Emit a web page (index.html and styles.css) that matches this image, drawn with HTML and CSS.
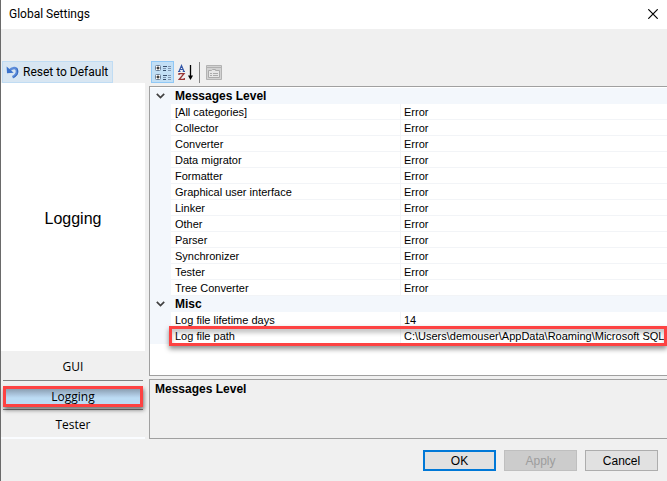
FILE: index.html
```html
<!DOCTYPE html>
<html lang="en">
<head>
<meta charset="utf-8">
<meta name="viewport" content="width=device-width, initial-scale=1">
<title>Global Settings</title>
<link rel="stylesheet" href="styles.css">
</head>
<body>
<div class="dialog">
  <header class="titlebar">
    <h1>Global Settings</h1>
    <button class="close" type="button" aria-label="Close">
      <svg width="10" height="10" viewBox="0 0 10 10"><path d="M0.3 0.3 9.7 9.7M9.7 0.3 0.3 9.7" stroke="#000" stroke-width="1.2" fill="none"/></svg>
    </button>
  </header>
  <main class="content">
    <aside class="sidebar">
      <button class="reset" type="button">
        <svg width="14" height="14" viewBox="0 0 14 14"><path d="M3 6C6 2.3 10.700 1.800 11 6c.2 3-1.700 5-4.500 6.200" fill="none" stroke="#5b8bd9" stroke-width="2.600"/><path d="M7.500 12.300c3.700-1.300 5.500-5.500 3.300-9" fill="none" stroke="#2f63b8" stroke-width="1"/><path d="M.6 1.500 1 8.200l6.700-.4z" fill="#3a72cc"/></svg>
        Reset to Default
      </button>
      <div class="page-name">Logging</div>
      <nav class="tabs">
        <button type="button">GUI</button>
        <button type="button" class="selected">Logging</button>
        <button type="button">Tester</button>
      </nav>
    </aside>
    <section class="settings">
      <div class="toolbar">
        <button type="button" class="tool active" aria-label="Categorized">
          <svg width="18" height="17" viewBox="0 0 18 17"><g fill="#fff" stroke="#6b8099"><rect x="1.500" y="1.500" width="5" height="5" rx="1"/><rect x="1.500" y="10.500" width="5" height="5" rx="1"/></g><path d="M2.500 4h3M4 2.500v3M2.500 13h3M4 11.500v3" stroke="#000"/><path d="M9 2.500h4M9 6.500h3M9 11.500h4M9 15.500h3" stroke="#38506e"/><path d="M9 4.500h3M14 2.500h3M14 4.500h3M14 6.500h3M9 13.500h3M14 11.500h3M14 13.500h3M14 15.500h3" stroke="#7e93ad"/></svg>
        </button>
        <button type="button" class="tool" aria-label="Alphabetical">
          <svg width="16" height="17" viewBox="0 0 16 17"><path d="M1 7.500 3.500 1.500 6 7.500M2 5.500h3M0 7.500h2.500M4.700 7.500H7" fill="none" stroke="#3558a8" stroke-width="1.200"/><path d="M1 11V9.600h5L1.300 15.300h5V14" fill="none" stroke="#983535" stroke-width="1.300"/><path d="M12.500 1v12" stroke="#000" stroke-width="1.300"/><path d="M10 11.500h5l-2.500 4.500z"/></svg>
        </button>
        <span class="divider"></span>
        <button type="button" class="tool" aria-label="Property Pages" disabled>
          <svg width="16" height="15" viewBox="0 0 16 15"><path d="M.5.500h15v14H.5z" fill="#d2d2d2" stroke="#b3b3b3"/><path d="M1 2.500h14" stroke="#b0b0b0"/><path d="M2.500 5.500h3l1-1h3v1h4v7h-11z" fill="#e6e6e6" stroke="#aaa"/><path d="M4 8.500h2M7 8.500h5M4 10.500h2M7 10.500h5" stroke="#aaa"/></svg>
        </button>
      </div>
      <div class="grid-box">
        <table class="grid">
          <colgroup><col class="c-gutter"><col class="c-name"><col></colgroup>
          <tbody>
            <tr class="category"><td><button type="button" aria-label="Collapse Messages Level"><svg width="9" height="6" viewBox="0 0 9 6"><path d="M.8.8 4.500 4.500 8.200.8" fill="none" stroke="#404040" stroke-width="1.700"/></svg></button></td><th colspan="2">Messages Level</th></tr>
            <tr><td></td><th>[All categories]</th><td>Error</td></tr>
            <tr><td></td><th>Collector</th><td>Error</td></tr>
            <tr><td></td><th>Converter</th><td>Error</td></tr>
            <tr><td></td><th>Data migrator</th><td>Error</td></tr>
            <tr><td></td><th>Formatter</th><td>Error</td></tr>
            <tr><td></td><th>Graphical user interface</th><td>Error</td></tr>
            <tr><td></td><th>Linker</th><td>Error</td></tr>
            <tr><td></td><th>Other</th><td>Error</td></tr>
            <tr><td></td><th>Parser</th><td>Error</td></tr>
            <tr><td></td><th>Synchronizer</th><td>Error</td></tr>
            <tr><td></td><th>Tester</th><td>Error</td></tr>
            <tr><td></td><th>Tree Converter</th><td>Error</td></tr>
          </tbody>
          <tbody>
            <tr class="category"><td><button type="button" aria-label="Collapse Misc"><svg width="9" height="6" viewBox="0 0 9 6"><path d="M.8.8 4.500 4.500 8.200.8" fill="none" stroke="#404040" stroke-width="1.700"/></svg></button></td><th colspan="2">Misc</th></tr>
            <tr><td></td><th>Log file lifetime days</th><td>14</td></tr>
            <tr class="marked"><td></td><th>Log file path</th><td>C:\Users\demouser\AppData\Roaming\Microsoft SQL</td></tr>
          </tbody>
        </table>
      </div>
      <div class="description">Messages Level</div>
    </section>
  </main>
  <footer class="actions">
    <button type="button" class="default">OK</button>
    <button type="button" disabled>Apply</button>
    <button type="button">Cancel</button>
  </footer>
</div>
</body>
</html>
```
FILE: styles.css
```css
* { box-sizing: border-box; }

body {
  margin: 0;
  font-family: "Liberation Sans", Arial, sans-serif;
  font-size: 11px;
  color: #000;
}

button {
  margin: 0;
  padding: 0;
  border: 0;
  background: none;
  font: inherit;
  color: inherit;
}

svg { display: block; }

.dialog {
  display: flex;
  flex-direction: column;
  min-height: 100vh;
  border-left: 1px solid #6a6a6a;
  background: #f0f0f0;
  overflow: hidden;
}

.titlebar {
  display: flex;
  align-items: center;
  justify-content: space-between;
  height: 29px;
  padding: 0 9px 2px 8px;
  background: #fff;
}

.titlebar h1 {
  margin: 0;
  font: 12px Roboto, "Noto Sans", sans-serif;
}

.content {
  display: flex;
  flex: 1;
  gap: 4px;
  padding-top: 32px;
}

.sidebar {
  display: flex;
  flex-direction: column;
  width: 144px;
  font-family: "Open Sans", "Noto Sans", sans-serif;
  font-size: 12px;
}

.reset {
  display: flex;
  align-items: center;
  align-self: flex-start;
  gap: 3px;
  height: 22px;
  margin-left: 1px;
  padding: 0 4px 0 3px;
  border: 1px solid #c0dcf3;
  background: #d8e6f2;
  font-family: Roboto, "Noto Sans", sans-serif;
  white-space: nowrap;
}

.page-name {
  display: flex;
  flex: 1;
  align-items: center;
  justify-content: center;
  padding-top: 4px;
  background: #fff;
  font: 16px "Liberation Sans", Arial, sans-serif;
}

.tabs {
  display: flex;
  flex-direction: column;
  padding: 0 2px;
  border-bottom: 2px solid #fafcff;
}

.tabs button {
  position: relative;
  height: 29px;
  padding-top: 2px;
  border-bottom: 1px solid #7f7f7f;
}

.tabs button:first-child { height: 30px; }

.tabs button:last-child {
  height: 27px;
  border-bottom: 0;
}

.tabs .selected { z-index: 0; }

.tabs .selected::before {
  content: "";
  position: absolute;
  z-index: -1;
  inset: 5px 0 2px;
  border: 3px solid #fd4242;
  background: linear-gradient(#8b9fb2, #b3cfe8 7px, #bcdcf4 9px);
  box-shadow: 1px 3px 4px #00000080;
}

.settings {
  display: flex;
  flex: 1;
  flex-direction: column;
  min-width: 0;
}

.toolbar {
  display: flex;
  align-items: center;
  height: 22px;
  margin-bottom: 3px;
  padding-left: 2px;
}

.tool {
  display: grid;
  place-items: center;
  width: 23px;
  height: 22px;
}

.tool.active {
  border: 1px solid #90c8f6;
  background: #c2dff5;
}

.divider {
  width: 1px;
  height: 21px;
  margin: 0 2px 0 2px;
  background: #858585;
}

.grid-box {
  flex: 1;
  padding-top: 1px;
  border: 1px solid #a0a0a0;
  border-right: 0;
  background: #fff;
}

.grid {
  width: 100%;
  table-layout: fixed;
  border-collapse: separate;
  border-spacing: 0;
}

.c-gutter { width: 21px; }
.c-name { width: 229px; }

.grid tr { height: 16px; }

.grid td,
.grid th {
  height: 16px;
  padding: 1px 0 0 4px;
  border-bottom: 1px solid #f2f4f7;
  font-weight: normal;
  line-height: 14px;
  text-align: left;
  white-space: nowrap;
}

.grid td:first-child {
  padding: 0;
  border-color: #f3f7fc;
  background: #f3f7fc;
}

.grid th + td {
  padding-left: 3px;
  border-left: 1px solid #f2f4f7;
}

.grid .category th {
  border-color: #f3f7fc;
  background: #f3f7fc;
  font-size: 12px;
  font-weight: bold;
}

.category button {
  display: block;
  margin: 0 auto;
}

.marked { position: relative; }

.marked th::after {
  content: "";
  position: absolute;
  inset: -2px 0 -2px 19px;
  border: 3px solid #fd4242;
  box-shadow: 0 3px 5px #00000070, inset 0 4px 4px #00000038;
}

.description {
  height: 60px;
  margin-top: 3px;
  padding: 2px 5px;
  border: 1px solid #a0a0a0;
  border-right: 0;
  font-size: 12px;
  font-weight: bold;
  line-height: 15px;
}

.actions {
  display: flex;
  justify-content: flex-end;
  gap: 8px;
  padding: 11px 9px 10px;
}

.actions button {
  width: 73px;
  height: 21px;
  border: 1px solid #adadad;
  background: #e1e1e1;
  font-size: 12px;
}

.actions .default { border: 2px solid #0078d7; }

.actions button:disabled {
  border-color: #bfbfbf;
  background: #ccc;
  color: #9d9d9d;
}
```
